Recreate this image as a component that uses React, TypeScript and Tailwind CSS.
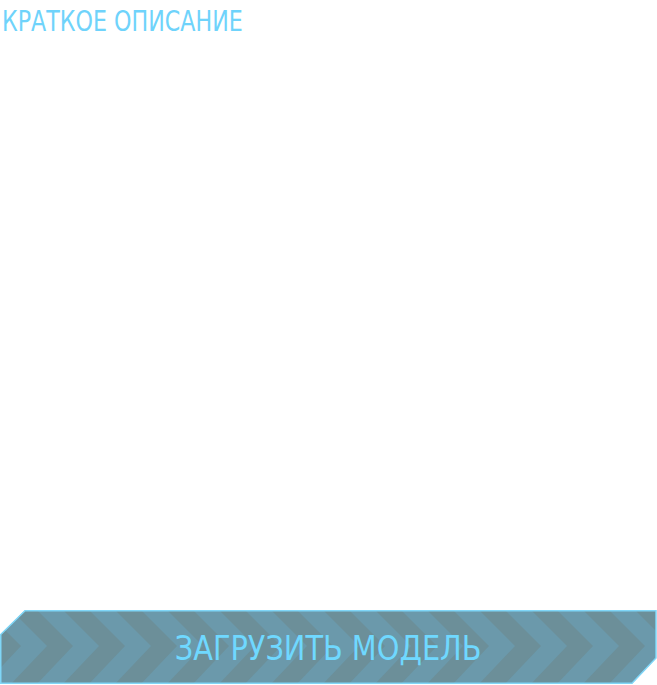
const STRIPES = Array.from({ length: 15 }, (_, i) => i * 52 - 42);

function ChevronBackdrop() {
  return (
    <svg className="absolute inset-0 h-full w-full" viewBox="0 0 657 74" preserveAspectRatio="none" aria-hidden>
      <defs>
        <clipPath id="btn-shape">
          <polygon points="0.5,24.5 25,0.5 656,0.5 656,48 632,73.5 0.5,73.5" />
        </clipPath>
      </defs>
      <g clipPath="url(#btn-shape)">
        <rect x="0" y="0" width="657" height="74" fill="#6b99ab" />
        {STRIPES.map((x) => (
          <polygon
            key={x}
            points={`${x},-1 ${x + 26},-1 ${x + 63},36 ${x + 26},75 ${x},75 ${x + 37},36`}
            fill="#6c8f99"
          />
        ))}
      </g>
      <polygon
        points="0.75,24.5 25,0.75 656,0.75 656,48 632,73.25 0.75,73.25"
        fill="none"
        stroke="#7fd6f7"
        strokeWidth="1.5"
      />
    </svg>
  );
}

export default function App() {
  return (
    <div
      className="flex h-[685px] w-[657px] flex-col bg-white"
      style={{ fontFamily: '"DejaVu Sans Condensed", "Liberation Sans", sans-serif' }}
    >
      <div className="pl-[2px] pt-[3px]">
        <h2 className="inline-block origin-left scale-x-[0.85] text-[29px] leading-[36px] font-normal uppercase text-[#6fd3fb]">
          Краткое описание
        </h2>
      </div>
      <button
        type="button"
        className="relative mt-auto mb-[1px] flex h-[74px] w-full items-center justify-center"
      >
        <ChevronBackdrop />
        <span className="relative inline-block translate-y-[1px] scale-x-[0.97] text-[33px] leading-none uppercase text-[#6fd8ff]">
          Загрузить модель
        </span>
      </button>
    </div>
  );
}
